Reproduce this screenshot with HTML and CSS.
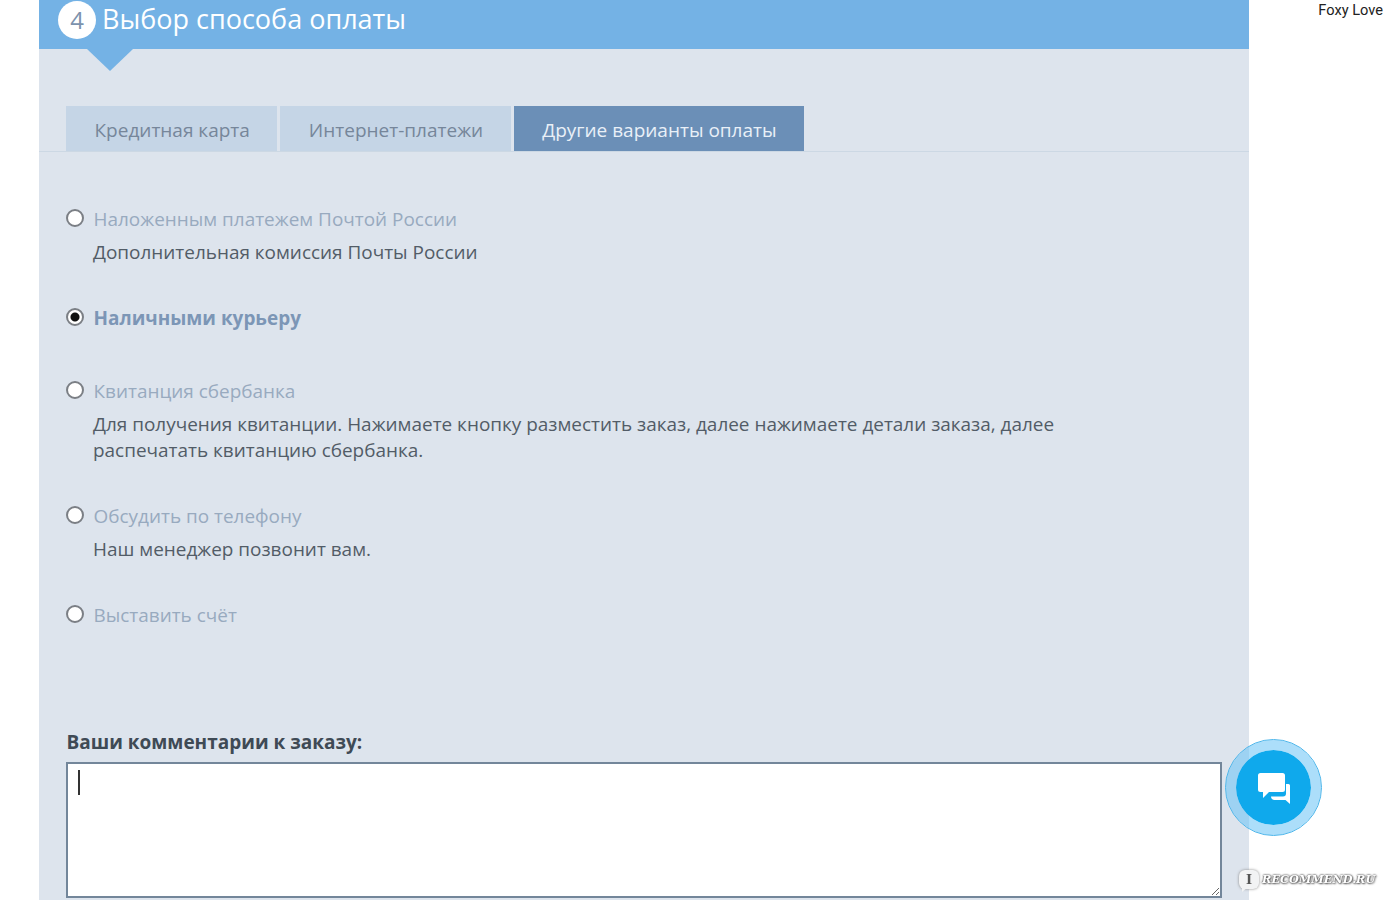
FILE: index.html
```html
<!DOCTYPE html>
<html lang="ru">
<head>
  <meta charset="UTF-8">
  <title>Выбор способа оплаты</title>
  <link rel="stylesheet" href="styles.css">
</head>
<body>

<div class="page">
  <main class="panel">
    <h1 class="step-title"><span class="step-num">4</span>Выбор способа оплаты</h1>

    <div class="tabs">
      <div class="tab">Кредитная карта</div>
      <div class="tab">Интернет-платежи</div>
      <div class="tab active">Другие варианты оплаты</div>
    </div>

    <div class="options">
      <div class="option">
        <label class="option-label"><input type="radio" name="pay">Наложенным платежем Почтой России</label>
        <div class="option-desc">Дополнительная комиссия Почты России</div>
      </div>
      <div class="option">
        <label class="option-label checked"><input type="radio" name="pay" checked>Наличными курьеру</label>
      </div>
      <div class="option">
        <label class="option-label"><input type="radio" name="pay">Квитанция сбербанка</label>
        <div class="option-desc">Для получения квитанции. Нажимаете кнопку разместить заказ, далее нажимаете детали заказа, далее распечатать квитанцию сбербанка.</div>
      </div>
      <div class="option">
        <label class="option-label"><input type="radio" name="pay">Обсудить по телефону</label>
        <div class="option-desc">Наш менеджер позвонит вам.</div>
      </div>
      <div class="option">
        <label class="option-label"><input type="radio" name="pay">Выставить счёт</label>
      </div>
    </div>

    <div class="comment">
      <div class="comment-title">Ваши комментарии к заказу:</div>
      <div class="comment-box">
        <textarea class="comment-input"></textarea>
        <span class="caret"></span>
      </div>
    </div>
  </main>

  <div class="user-name">Foxy Love</div>
</div>

<div class="chat-btn">
  <svg width="36" height="34" viewBox="0 0 36 34">
    <path class="bubble" d="M4.500 2h22a2.500 2.500 0 0 1 2.500 2.500v14a2.500 2.500 0 0 1-2.500 2.500H13l-6 6v-6H4.500A2.500 2.500 0 0 1 2 18.500v-14A2.500 2.500 0 0 1 4.500 2z"/>
    <path class="bubble" d="M30 13h2.500a1.500 1.500 0 0 1 1.500 1.500V33l-4.500-4H18.500c-2 0-3.500-1.500-3.500-3.500h12a3 3 0 0 0 3-3z"/>
  </svg>
</div>

<div class="watermark">
  <span class="wm-icon">I</span>
  <span class="wm-text">RECOMMEND.RU</span>
</div>

</body>
</html>
```

FILE: styles.css
```css
html, body {
  margin: 0;
  height: 900px;
  overflow: hidden;
  background-color: #fff;
}
body {
  font-family: "Open Sans", "Noto Sans", sans-serif;
  color: #44505c;
}
.page {
  display: flex;
  padding-left: 39px;
}
.panel {
  width: 1210px;
  height: 900px;
  flex: none;
  background-color: #dde4ed;
}
.user-name {
  margin-left: auto;
  padding: 1px 3px 0 0;
  font-family: Roboto, sans-serif;
  font-size: 14.6px;
  line-height: 18px;
  color: #222;
}

.step-title {
  position: relative;
  display: flex;
  align-items: center;
  height: 49px;
  margin: 0 0 57px;
  padding: 0 0 12px 19px;
  box-sizing: border-box;
  background-color: #74b2e5;
  color: #fff;
  font-size: 27px;
  font-weight: 400;
}
.step-title::after {
  content: "";
  position: absolute;
  left: 48px;
  top: 49px;
  border-left: 23px solid transparent;
  border-right: 23px solid transparent;
  border-top: 22px solid #74b2e5;
}
.step-num {
  display: flex;
  align-items: center;
  justify-content: center;
  width: 38px;
  height: 38px;
  margin-top: 2px;
  margin-right: 6px;
  border-radius: 50%;
  background-color: #fff;
  color: #7d93ad;
  font-size: 24px;
}

.tabs {
  display: flex;
  gap: 3px;
  height: 45px;
  padding-left: 27px;
  border-bottom: 1px solid #ccd8e4;
}
.tab {
  padding: 0 27.500px 0 28.500px;
  background-color: #c5d5e6;
  color: #76869a;
  font-size: 19px;
  line-height: 49px;
}
.tab.active {
  background-color: #6b8fb7;
  color: #e9f0f7;
}

.options {
  padding: 51px 0 0 27px;
}
.option {
  margin-bottom: 40px;
}
.option-label {
  display: flex;
  align-items: center;
  height: 31px;
  padding-bottom: 2px;
  color: #98aabf;
  font-size: 18.950px;
}
.option-label.checked {
  color: #7c96b6;
  font-weight: 700;
}
.option-label input {
  appearance: none;
  width: 18px;
  height: 18px;
  margin: -2px 9.500px 0 0;
  box-sizing: border-box;
  border: 2px solid #7b7f85;
  border-radius: 50%;
  background-color: #fff;
}
.option-label input:checked {
  background: radial-gradient(circle, #111 0 4px, #fff 5px);
}
.option-desc {
  width: 985px;
  margin-bottom: -3px;
  padding: 3px 0 0 27px;
  color: #525c67;
  font-size: 18.950px;
  line-height: 26px;
}

.comment {
  padding: 57px 27px 0;
}
.comment-title {
  margin-bottom: 7px;
  padding-left: 0.500px;
  color: #3f4a55;
  font-size: 19px;
  font-weight: 700;
  line-height: 26px;
}
.comment-box {
  position: relative;
  height: 136px;
}
.comment-input {
  display: block;
  width: 100%;
  height: 136px;
  margin: 0;
  padding: 0;
  box-sizing: border-box;
  border: 2px solid #73869a;
  background-color: #fff;
  outline: none;
}
.caret {
  position: absolute;
  left: 12px;
  top: 8px;
  width: 2px;
  height: 25px;
  background-color: #333;
}

.chat-btn {
  position: fixed;
  left: 1226px;
  top: 740px;
  display: flex;
  align-items: center;
  justify-content: center;
  width: 75px;
  height: 75px;
  border: 10px solid rgba(103, 195, 245, 0.55);
  border-radius: 50%;
  outline: 1px solid #4cb5ea;
  background-clip: padding-box;
  background-color: #0fa9ec;
}
.bubble {
  fill: #fff;
}

.watermark {
  position: fixed;
  left: 1239px;
  top: 867px;
  display: flex;
  align-items: center;
  gap: 3px;
  height: 24px;
}
.wm-icon {
  position: relative;
  display: flex;
  align-items: center;
  justify-content: center;
  width: 20px;
  height: 19px;
  border-radius: 6px;
  background-color: #f2f3f4;
  box-shadow: 0 0 3px #888;
  color: #555;
  font-family: "DejaVu Serif", serif;
  font-size: 13px;
  font-weight: 700;
}
.wm-icon::after {
  content: "";
  position: absolute;
  left: 3px;
  top: 17px;
  border-left: 6px solid #f2f3f4;
  border-bottom: 5px solid transparent;
}
.wm-text {
  color: #fff;
  font-family: "DejaVu Serif", serif;
  font-size: 11.300px;
  font-style: italic;
  font-weight: 700;
  text-shadow: 0 0 2px #555, 0 0 2px #555, 1px 1px 2px #777;
}
```
